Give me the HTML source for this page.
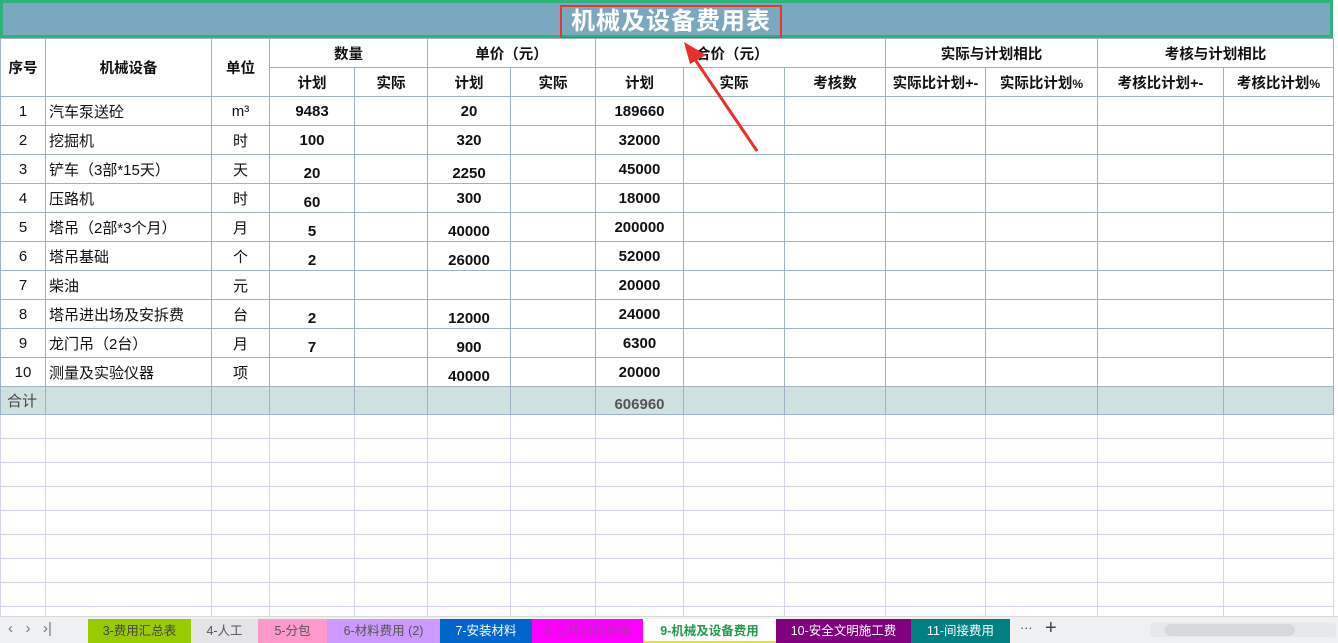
<!DOCTYPE html>
<html><head><meta charset="utf-8"><style>
*{margin:0;padding:0;box-sizing:border-box}
body{width:1338px;height:643px;overflow:hidden;background:#fff;font-family:"Liberation Sans","Noto Sans CJK SC",sans-serif;position:relative}
table{border-collapse:collapse;table-layout:fixed;position:absolute;left:0;top:38px}
td{border:1px solid #9db3c3;font-size:15px;color:#111;text-align:center;overflow:hidden;white-space:nowrap;padding:0}
td.l{text-align:left;padding-left:3px}
tr.h td{font-weight:bold;font-size:14.5px}
tr.d td{height:29px}
tr.d td:nth-child(n+4){font-weight:bold}
tr.e td{height:24px;border-color:#d4d6e6}
tr.t td{background:#cfe0e0;height:28px}
.lo{padding-top:8px}
#title{position:absolute;left:0;top:0;width:1333px;height:38px;background:#7aa9bf;border:3px solid #2db37a;}
#title span{position:absolute;left:557px;top:2px;width:222px;height:34px;border:2px solid #e33;color:#fff;font-weight:bold;font-size:24px;line-height:30px;text-align:center;letter-spacing:1px}
#tabs{position:absolute;left:0;top:616px;width:1338px;height:27px;background:#eef0f2;border-top:1px solid #d8d8d8;font-size:12.5px}
.tab{position:absolute;top:2px;height:24px;line-height:24px;text-align:center}
</style></head><body>
<div id="title"><span>机械及设备费用表</span></div>
<table>
<colgroup><col style="width:45px"><col style="width:166px"><col style="width:58px"><col style="width:85px"><col style="width:73px"><col style="width:83px"><col style="width:85px"><col style="width:88px"><col style="width:101px"><col style="width:101px"><col style="width:100px"><col style="width:112px"><col style="width:126px"><col style="width:110px"></colgroup>
<tr class="h" style="height:29px"><td rowspan="2">序号</td><td rowspan="2">机械设备</td><td rowspan="2">单位</td><td colspan="2">数量</td><td colspan="2">单价（元）</td><td colspan="3" style="padding-left:100px;text-align:left">合价（元）</td><td colspan="2">实际与计划相比</td><td colspan="2">考核与计划相比</td></tr>
<tr class="h" style="height:29px"><td>计划</td><td>实际</td><td>计划</td><td>实际</td><td>计划</td><td>实际</td><td>考核数</td><td>实际比计划+-</td><td>实际比计划<small>%</small></td><td>考核比计划+-</td><td>考核比计划<small>%</small></td></tr>
<tr class="d"><td>1</td><td class="l">汽车泵送砼</td><td>m³</td><td>9483</td><td></td><td>20</td><td></td><td>189660</td><td></td><td></td><td></td><td></td><td></td><td></td></tr>
<tr class="d"><td>2</td><td class="l">挖掘机</td><td>时</td><td>100</td><td></td><td>320</td><td></td><td>32000</td><td></td><td></td><td></td><td></td><td></td><td></td></tr>
<tr class="d"><td>3</td><td class="l">铲车（3部*15天）</td><td>天</td><td class="lo">20</td><td></td><td class="lo">2250</td><td></td><td>45000</td><td></td><td></td><td></td><td></td><td></td><td></td></tr>
<tr class="d"><td>4</td><td class="l">压路机</td><td>时</td><td class="lo">60</td><td></td><td>300</td><td></td><td>18000</td><td></td><td></td><td></td><td></td><td></td><td></td></tr>
<tr class="d"><td>5</td><td class="l">塔吊（2部*3个月）</td><td>月</td><td class="lo">5</td><td></td><td class="lo">40000</td><td></td><td>200000</td><td></td><td></td><td></td><td></td><td></td><td></td></tr>
<tr class="d"><td>6</td><td class="l">塔吊基础</td><td>个</td><td class="lo">2</td><td></td><td class="lo">26000</td><td></td><td>52000</td><td></td><td></td><td></td><td></td><td></td><td></td></tr>
<tr class="d"><td>7</td><td class="l">柴油</td><td>元</td><td></td><td></td><td></td><td></td><td>20000</td><td></td><td></td><td></td><td></td><td></td><td></td></tr>
<tr class="d"><td>8</td><td class="l">塔吊进出场及安拆费</td><td>台</td><td class="lo">2</td><td></td><td class="lo">12000</td><td></td><td>24000</td><td></td><td></td><td></td><td></td><td></td><td></td></tr>
<tr class="d"><td>9</td><td class="l">龙门吊（2台）</td><td>月</td><td class="lo">7</td><td></td><td class="lo">900</td><td></td><td>6300</td><td></td><td></td><td></td><td></td><td></td><td></td></tr>
<tr class="d"><td>10</td><td class="l">测量及实验仪器</td><td>项</td><td></td><td></td><td class="lo">40000</td><td></td><td>20000</td><td></td><td></td><td></td><td></td><td></td><td></td></tr>
<tr class="t"><td style="color:#444;text-align:left;padding-left:6px">合计</td><td></td><td></td><td></td><td></td><td></td><td></td><td class="lo" style="color:#555;font-weight:bold">606960</td><td></td><td></td><td></td><td></td><td></td><td></td></tr>
<tr class="e"><td></td><td></td><td></td><td></td><td></td><td></td><td></td><td></td><td></td><td></td><td></td><td></td><td></td><td></td></tr>
<tr class="e"><td></td><td></td><td></td><td></td><td></td><td></td><td></td><td></td><td></td><td></td><td></td><td></td><td></td><td></td></tr>
<tr class="e"><td></td><td></td><td></td><td></td><td></td><td></td><td></td><td></td><td></td><td></td><td></td><td></td><td></td><td></td></tr>
<tr class="e"><td></td><td></td><td></td><td></td><td></td><td></td><td></td><td></td><td></td><td></td><td></td><td></td><td></td><td></td></tr>
<tr class="e"><td></td><td></td><td></td><td></td><td></td><td></td><td></td><td></td><td></td><td></td><td></td><td></td><td></td><td></td></tr>
<tr class="e"><td></td><td></td><td></td><td></td><td></td><td></td><td></td><td></td><td></td><td></td><td></td><td></td><td></td><td></td></tr>
<tr class="e"><td></td><td></td><td></td><td></td><td></td><td></td><td></td><td></td><td></td><td></td><td></td><td></td><td></td><td></td></tr>
<tr class="e"><td></td><td></td><td></td><td></td><td></td><td></td><td></td><td></td><td></td><td></td><td></td><td></td><td></td><td></td></tr>
<tr class="e"><td></td><td></td><td></td><td></td><td></td><td></td><td></td><td></td><td></td><td></td><td></td><td></td><td></td><td></td></tr>
</table>
<svg style="position:absolute;left:0;top:0" width="1338" height="643"><line x1="757" y1="151" x2="694" y2="58" stroke="#e8302a" stroke-width="3"/><polygon points="684,42 706,55 690,64" fill="#e8302a"/></svg>
<div id="tabs">
<span style="position:absolute;left:8px;top:3px;color:#777;font-size:15px">‹ &nbsp; › &nbsp; ›|</span>
<div class="tab" style="left:88px;width:103px;background:#99cc00;color:#444">3-费用汇总表</div>
<div class="tab" style="left:191px;width:67px;background:#e4e4e8;color:#555">4-人工</div>
<div class="tab" style="left:258px;width:69px;background:#ff99cc;color:#555">5-分包</div>
<div class="tab" style="left:327px;width:113px;background:#cc99ff;color:#555">6-材料费用 (2)</div>
<div class="tab" style="left:440px;width:92px;background:#0066cc;color:#fff">7-安装材料</div>
<div class="tab" style="left:532px;width:111px;background:#ff00ff;color:#b030b0">8-周转材料费用</div>
<div class="tab" style="left:643px;width:133px;background:#fff;color:#22994a;font-weight:bold;border-bottom:2px solid #e8e800">9-机械及设备费用</div>
<div class="tab" style="left:776px;width:135px;background:#800080;color:#fff">10-安全文明施工费</div>
<div class="tab" style="left:911px;width:99px;background:#008080;color:#fff">11-间接费用</div>
<span style="position:absolute;left:1020px;top:4px;color:#444">···</span>
<span style="position:absolute;left:1045px;top:0px;color:#444;font-size:20px">+</span>
<div style="position:absolute;left:1150px;top:6px;width:186px;height:14px;background:#e6e8ea;border-radius:3px"></div>
<div style="position:absolute;left:1165px;top:7px;width:130px;height:12px;background:#d6d8da;border-radius:6px"></div>
</div>
</body></html>
